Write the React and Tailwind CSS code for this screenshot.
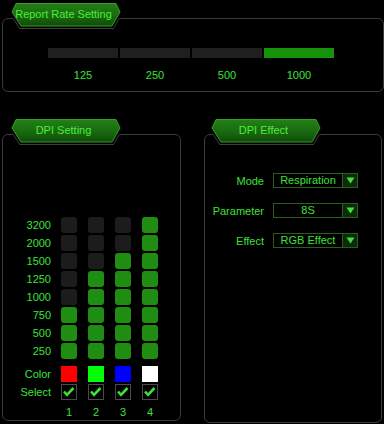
import React from "react";

const GREEN_TEXT = "text-[#3ee03a]";

function Tab({ label, id, className }) {
  // svg coords: tab left point at x=4, top at y=1; panel line center at y=16.5
  const ox = 4;
  const oy = 1;
  const p = (pts) => pts.map(([x, y]) => `${x + ox},${y + oy}`).join(" ");
  return (
    <div className={`absolute top-[-17px] w-[118px] h-[28px] ${className}`}>
      <svg width="118" height="28" viewBox="0 0 118 28" className="absolute inset-0">
        <defs>
          <linearGradient id={id} x1="0" y1="0" x2="0" y2="1">
            <stop offset="0" stopColor="#238016" />
            <stop offset="0.5" stopColor="#1a6c10" />
            <stop offset="1" stopColor="#0e4c08" />
          </linearGradient>
        </defs>
        <polygon points={p([[0.9, 15], [107.5, 15], [101.5, 25.5], [7.6, 25.5]])} fill="#000" />
        <polyline
          points={p([[1.2, 15.5], [7.6, 25.5], [101.5, 25.5], [107.2, 15.5]])}
          fill="none"
          stroke="#3d3d3d"
          strokeWidth="1"
        />
        <polygon
          points={p([[4, 0.5], [104, 0.5], [108, 9], [100, 23], [9, 23], [0, 9]])}
          fill={`url(#${id})`}
          stroke="#3a9a2a"
          strokeWidth="1"
        />
      </svg>
      <div className="absolute left-[4px] top-[1px] w-[108px] h-[23px] flex items-center justify-center pr-[5px]">
        <span className="text-[11px] leading-none text-[#4cec3c]">{label}</span>
      </div>
    </div>
  );
}

function Check() {
  return (
    <div className="relative w-4 h-4 border border-[#4a4a4a] bg-black">
      <svg width="16" height="16" viewBox="0 0 16 16" className="absolute left-[-1px] top-[-1px]">
        <polyline points="3,7.5 6,10.8 12.5,4" fill="none" stroke="#3ee03a" strokeWidth="2.6" strokeLinejoin="miter" />
      </svg>
    </div>
  );
}

function Select({ value }) {
  return (
    <div className="flex w-[85px] h-[15px] border border-[#2b5e1c] bg-black">
      <div className={`flex-1 flex items-center justify-center text-[11px] leading-none ${GREEN_TEXT}`}>{value}</div>
      <div className="w-[15px] h-full border-l border-[#2b5e1c] bg-[#0e2a0c] flex items-center justify-center">
        <svg width="9" height="7" viewBox="0 0 9 7">
          <polygon points="0.5,0.5 8.5,0.5 4.5,6.5" fill="#3ee03a" />
        </svg>
      </div>
    </div>
  );
}

const levels = ["3200", "2000", "1500", "1250", "1000", "750", "500", "250"];
// number of green cells from bottom per column
const fill = [3, 5, 6, 8];
const colors = ["bg-[#ff0000]", "bg-[#00ff00]", "bg-[#0000ff]", "bg-[#ffffff]"];

export default function App() {
  return (
    <div className="w-[384px] h-[424px] bg-black overflow-hidden font-['Liberation_Sans',Arial,sans-serif] text-[11px]">
      {/* Report rate panel */}
      <div className="pt-[18px] pl-[2px]">
        <div className="relative w-[382px] h-[74px] border border-[#3a3a3a] rounded-[6px]">
          <Tab label="Report Rate Setting" id="tabRate" className="left-[5px]" />
          <div className="pl-[45px] pt-[29px]">
            <div className="flex gap-[2px]">
              <div className="w-[70px] h-[10px] bg-[#1f1f1f]" />
              <div className="w-[70px] h-[10px] bg-[#1f1f1f]" />
              <div className="w-[70px] h-[10px] bg-[#1f1f1f]" />
              <div className="w-[70px] h-[10px] bg-[#17920b]" />
            </div>
            <div className={`flex gap-[2px] mt-[11px] leading-[13px] ${GREEN_TEXT}`}>
              {["125", "250", "500", "1000"].map((t) => (
                <div key={t} className="w-[70px] text-center">{t}</div>
              ))}
            </div>
          </div>
        </div>
      </div>

      {/* Bottom panels */}
      <div className="flex pl-[2px] mt-[42px]">
        {/* DPI Setting */}
        <div className="relative w-[179px] h-[287px] border border-[#3a3a3a] rounded-[6px]">
          <Tab label="DPI Setting" id="tabDpi" className="left-[5px]" />
          <div className="pt-[82px] flex flex-col">
            <div className="flex flex-col gap-[2px]">
              {levels.map((lv, ri) => (
                <div key={lv} className="flex h-4 items-center">
                  <div className={`w-[48px] text-right leading-4 ${GREEN_TEXT}`}>{lv}</div>
                  <div className="ml-[10px] flex gap-[11px]">
                    {fill.map((f, ci) => {
                      const on = ri >= levels.length - f;
                      return (
                        <div
                          key={ci}
                          className={`w-4 h-4 rounded-[3px] ${on ? "bg-[#1f8c12]" : "bg-[#1c1c1c]"}`}
                        />
                      );
                    })}
                  </div>
                </div>
              ))}
            </div>
            <div className="flex h-4 items-center mt-[7px]">
              <div className={`w-[48px] text-right leading-4 ${GREEN_TEXT}`}>Color</div>
              <div className="ml-[10px] flex gap-[11px]">
                {colors.map((c) => (
                  <div key={c} className={`w-4 h-4 ${c}`} />
                ))}
              </div>
            </div>
            <div className="flex h-4 items-center mt-[2px]">
              <div className={`w-[48px] text-right leading-4 ${GREEN_TEXT}`}>Select</div>
              <div className="ml-[10px] flex gap-[11px]">
                <Check />
                <Check />
                <Check />
                <Check />
              </div>
            </div>
            <div className="flex h-4 items-center mt-[4px]">
              <div className="w-[48px]" />
              <div className={`ml-[10px] flex gap-[11px] ${GREEN_TEXT}`}>
                {["1", "2", "3", "4"].map((n) => (
                  <div key={n} className="w-4 text-center leading-4">{n}</div>
                ))}
              </div>
            </div>
          </div>
        </div>

        {/* DPI Effect */}
        <div className="relative ml-[23px] w-[178px] h-[289px] border border-[#3a3a3a] rounded-[6px]">
          <Tab label="DPI Effect" id="tabEffect" className="left-[3px]" />
          <div className="pt-[38px] flex flex-col gap-[15px]">
            {[
              ["Mode", "Respiration"],
              ["Parameter", "8S"],
              ["Effect", "RGB Effect"],
            ].map(([l, v]) => (
              <div key={l} className="flex items-center h-[15px]">
                <div className={`w-[59px] text-right leading-4 ${GREEN_TEXT}`}>{l}</div>
                <div className="ml-[9px]">
                  <Select value={v} />
                </div>
              </div>
            ))}
          </div>
        </div>
      </div>
    </div>
  );
}
